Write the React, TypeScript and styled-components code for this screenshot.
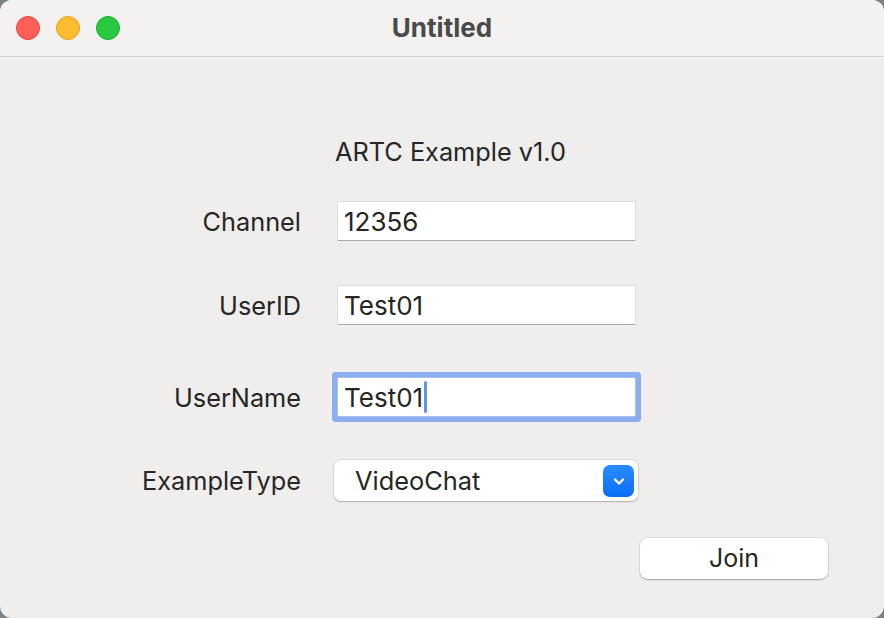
import React from "react";
import styled, { createGlobalStyle } from "styled-components";

const GlobalStyle = createGlobalStyle`
  html, body {
    margin: 0;
    padding: 0;
    background: #7a8286;
  }
  body {
    font-family: Inter, "Liberation Sans", sans-serif;
  }
`;

const Window = styled.div`
  width: 884px;
  height: 618px;
  border-radius: 12px;
  overflow: hidden;
  background: #efeeec;
  display: flex;
  flex-direction: column;
`;

const TitleBar = styled.div`
  height: 56px;
  flex: none;
  display: grid;
  grid-template-columns: 1fr auto 1fr;
  align-items: center;
  background: #f3f2f0;
  border-bottom: 1px solid #d4d3d1;
`;

const Lights = styled.div`
  display: flex;
  gap: 16px;
  padding-left: 16px;
`;

const Light = styled.span<{ $color: string; $edge: string }>`
  width: 24px;
  height: 24px;
  border-radius: 50%;
  box-sizing: border-box;
  background: ${(p) => p.$color};
  border: 1px solid ${(p) => p.$edge};
`;

const Title = styled.div`
  font-size: 26px;
  font-weight: 700;
  color: #4a4a4a;
  padding-bottom: 2px;
`;

const Body = styled.div`
  flex: 1;
  padding-top: 80px;
  display: flex;
  flex-direction: column;
`;

const Row = styled.div<{ $top?: number }>`
  display: grid;
  grid-template-columns: 301px 297px;
  column-gap: 37px;
  align-items: center;
  margin-top: ${(p) => p.$top ?? 0}px;
`;

const Label = styled.div`
  text-align: right;
  font-size: 25.3px;
  color: #262626;
`;

const Heading = styled.div`
  grid-column: 2;
  margin-left: -3px;
  font-size: 25.3px;
  line-height: 30px;
  color: #262626;
  white-space: nowrap;
`;

const Field = styled.div<{ $focused?: boolean }>`
  height: 38px;
  box-sizing: border-box;
  background: #fff;
  display: flex;
  align-items: center;
  padding-left: 6px;
  font-size: 26px;
  color: #262626;
  box-shadow: ${(p) =>
    p.$focused
      ? "0 0 0 1px #a9c2ef, 0 0 0 6px #8aaef0"
      : "0 0 0 1px rgba(0, 0, 0, 0.07), 0 1px 0 rgba(0, 0, 0, 0.22)"};
  border-radius: ${(p) => (p.$focused ? "1px" : "0")};
`;

const Caret = styled.span`
  display: inline-block;
  width: 3px;
  height: 32px;
  border-radius: 2px;
  background: #6393ef;
  margin-left: 1px;
`;

const Select = styled.div`
  height: 41px;
  width: 304px;
  margin-left: -4px;
  box-sizing: border-box;
  background: #fff;
  border-radius: 7px;
  box-shadow: 0 0 0 1px rgba(0, 0, 0, 0.08), 0 1px 1.5px rgba(0, 0, 0, 0.2);
  display: flex;
  align-items: center;
  justify-content: space-between;
  padding: 0 4px 0 21px;
  font-size: 25.4px;
  color: #262626;
`;

const SelectArrow = styled.span`
  width: 31px;
  height: 32px;
  border-radius: 7px;
  background: linear-gradient(#2a8cff, #0a6ef6);
  display: flex;
  align-items: center;
  justify-content: center;
`;

const Actions = styled.div`
  display: flex;
  justify-content: flex-end;
  padding-right: 56px;
  margin-top: 37px;
`;

const Button = styled.button`
  width: 188px;
  height: 41px;
  border: none;
  border-radius: 8px;
  background: #fff;
  box-shadow: 0 0 0 1px rgba(0, 0, 0, 0.06), 0 1px 1.5px rgba(0, 0, 0, 0.25);
  font-family: inherit;
  font-size: 25px;
  color: #262626;
  padding: 0 0 2px;
`;

export default function App() {
  return (
    <>
      <GlobalStyle />
      <Window>
        <TitleBar>
          <Lights>
            <Light $color="#ff5f57" $edge="#e2463f" />
            <Light $color="#febc2e" $edge="#e1a116" />
            <Light $color="#28c840" $edge="#14ae2b" />
          </Lights>
          <Title>Untitled</Title>
          <div />
        </TitleBar>
        <Body>
          <Row>
            <Heading>ARTC Example v1.0</Heading>
          </Row>
          <Row $top={35}>
            <Label>Channel</Label>
            <Field>12356</Field>
          </Row>
          <Row $top={46}>
            <Label>UserID</Label>
            <Field>Test01</Field>
          </Row>
          <Row $top={54}>
            <Label>UserName</Label>
            <Field $focused>
              Test01
              <Caret />
            </Field>
          </Row>
          <Row $top={44}>
            <Label>ExampleType</Label>
            <Select>
              VideoChat
              <SelectArrow>
                <svg width="16" height="16" viewBox="0 0 16 16">
                  <path
                    d="M4 6.5l4 4 4-4"
                    fill="none"
                    stroke="#fff"
                    strokeWidth="2.4"
                    strokeLinecap="round"
                    strokeLinejoin="round"
                  />
                </svg>
              </SelectArrow>
            </Select>
          </Row>
          <Actions>
            <Button>Join</Button>
          </Actions>
        </Body>
      </Window>
    </>
  );
}
